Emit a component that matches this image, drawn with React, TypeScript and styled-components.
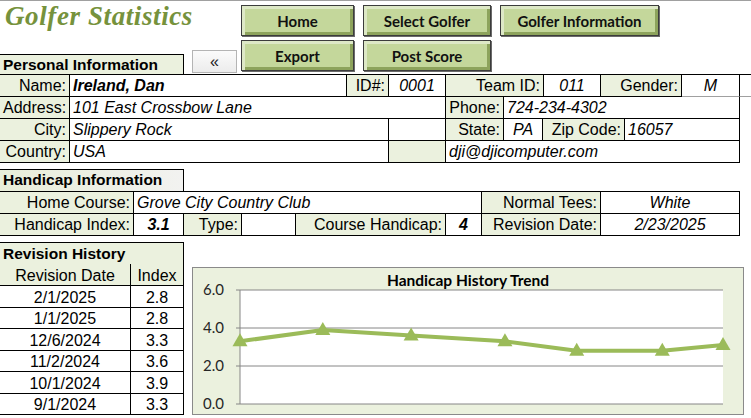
import React from "react";
import styled, { createGlobalStyle } from "styled-components";

const GlobalStyle = createGlobalStyle`
  html, body {
    margin: 0;
    padding: 0;
    background: #fff;
  }
  body {
    font-family: "Liberation Sans", Arial, sans-serif;
    color: #000;
  }
  * {
    box-sizing: border-box;
  }
`;

const Page = styled.div`
  width: 751px;
  height: 418px;
  overflow: hidden;
  border-top: 1px solid #a0a0a0;
`;

const TopBar = styled.div`
  display: flex;
  align-items: flex-start;
  height: 73px;
`;

const LeftCol = styled.div`
  width: 192px;
  height: 100%;
  display: flex;
  flex-direction: column;
  justify-content: space-between;
`;

const Title = styled.h1`
  margin: 1px 0 0 5px;
  white-space: nowrap;
  font-family: "Liberation Serif", "Times New Roman", serif;
  font-style: italic;
  font-weight: bold;
  font-size: 27px;
  line-height: 28px;
  letter-spacing: 0.6px;
  color: #76923c;
`;

const SectionHeader = styled.div<{ $height?: number; $fade?: boolean }>`
  width: 184px;
  height: ${(p) => p.$height ?? 20}px;
  border-top: 1px solid #000;
  border-right: 1px solid #000;
  background: ${(p) =>
    p.$fade ? "linear-gradient(to right, #e8eed9, #f2f2f0)" : "#ebf1de"};
  font-weight: bold;
  font-size: 15.5px;
  line-height: 20px;
  padding-left: 3px;
`;

const BackButton = styled.button`
  align-self: flex-end;
  margin-bottom: 1px;
  width: 45px;
  height: 23px;
  padding: 0;
  border: 1px solid #b4b4b4;
  background: linear-gradient(#fbfbfb, #ececec);
  font-family: "Liberation Sans", Arial, sans-serif;
  font-size: 16px;
  color: #222;
`;

const ButtonGrid = styled.div`
  margin: 4px 0 0 4px;
  display: grid;
  grid-template-columns: 113px 128px 159px;
  grid-auto-rows: 31px;
  column-gap: 9px;
  row-gap: 4px;
`;

const NavButton = styled.button`
  padding: 0;
  border: 1px solid #3c3c3c;
  background: #c4d79b;
  box-shadow: inset 3px 3px 0 #dde8c6, inset -3px -3px 0 #8da35c,
    1px 1px 0 #6a6a6a;
  font-family: "Lato", "Open Sans", sans-serif;
  font-weight: bold;
  font-size: 15px;
  color: #111;
`;

const Table = styled.div<{ $width: number }>`
  width: ${(p) => p.$width}px;
  border-top: 1px solid #000;
`;

const Row = styled.div<{ $h?: number }>`
  display: flex;
  height: ${(p) => p.$h ?? 22}px;
`;

const Cell = styled.div<{
  $w: number;
  $label?: boolean;
  $align?: "left" | "center" | "right";
  $bold?: boolean;
  $plain?: boolean;
  $shade?: boolean;
  $softBottom?: boolean;
}>`
  flex: 0 0 ${(p) => p.$w}px;
  width: ${(p) => p.$w}px;
  border-right: 1px solid #000;
  border-bottom: 1px solid ${(p) => (p.$softBottom ? "#a0a0a0" : "#000")};
  background: ${(p) => (p.$label || p.$shade ? "#ebf1de" : "#fff")};
  text-align: ${(p) => p.$align ?? (p.$label ? "right" : "left")};
  font-style: ${(p) => (p.$label || p.$plain ? "normal" : "italic")};
  font-weight: ${(p) => (p.$bold ? "bold" : "normal")};
  font-size: 16px;
  line-height: 20px;
  padding: 1px 3px 0;
  white-space: nowrap;
  overflow: hidden;
`;

const Filler = styled.div`
  flex: 1;
  border-bottom: 1px solid #a0a0a0;
`;

const Section = styled.div<{ $top: number }>`
  margin-top: ${(p) => p.$top}px;
`;

const HeaderBox = styled.div`
  height: 22px;
  display: flex;
  align-items: flex-end;
`;

const Bottom = styled.div`
  display: flex;
  align-items: flex-start;
  margin-top: 6px;
`;

const HistoryCol = styled.div`
  width: 184px;
  border-top: 1px solid #000;
  border-right: 1px solid #000;
`;

const HistoryTitle = styled.div`
  height: 21px;
  background: #ebf1de;
  font-weight: bold;
  font-size: 15.5px;
  line-height: 21px;
  padding-left: 3px;
`;

const HistoryRow = styled.div<{ $head?: boolean }>`
  display: grid;
  grid-template-columns: 131px 1fr;
  height: ${(p) => (p.$head ? 22 : 21.5)}px;
  background: ${(p) => (p.$head ? "#ebf1de" : "#fff")};
  border-bottom: 1px solid #000;
  font-size: 16px;
  line-height: 20px;
  padding-top: ${(p) => (p.$head ? 2 : 1.5)}px;
  text-align: center;
  overflow: hidden;

  & > span:first-child {
    border-right: 1px solid #000;
    margin-top: -2px;
    padding-top: 2px;
  }
`;

const ChartBox = styled.div`
  margin: 25px 0 0 8px;
  width: 552px;
  height: 148px;
  border: 1px solid #8a8a8a;
  background: #ebf1de;
`;

const history = [
  { date: "2/1/2025", index: "2.8" },
  { date: "1/1/2025", index: "2.8" },
  { date: "12/6/2024", index: "3.3" },
  { date: "11/2/2024", index: "3.6" },
  { date: "10/1/2024", index: "3.9" },
  { date: "9/1/2024", index: "3.3" },
];

// days since 9/1/2024, handicap index
const trend = [
  { d: 0, v: 3.3 },
  { d: 30, v: 3.9 },
  { d: 62, v: 3.6 },
  { d: 96, v: 3.3 },
  { d: 122, v: 2.8 },
  { d: 153, v: 2.8 },
  { d: 175, v: 3.1 },
];

const TrendChart: React.FC = () => {
  const x0 = 47;
  const x1 = 530;
  const yTop = 22;
  const yBot = 136;
  const px = (d: number) => x0 + (d / 175) * (x1 - x0);
  const py = (v: number) => yBot - (v / 6) * (yBot - yTop);
  const pts = trend.map((t) => [px(t.d), py(t.v)]);
  return (
    <svg width="550" height="146" viewBox="0 0 550 146">
      <rect x={x0} y={yTop} width={x1 - x0} height={yBot - yTop} fill="#fff" />
      {[6, 4, 2, 0].map((v) => (
        <g key={v}>
          <line x1={x0 - 4} x2={x1} y1={py(v)} y2={py(v)} stroke="#868686" strokeWidth="1" />
          <text
            x={x0 - 16}
            y={py(v) + 5}
            textAnchor="end"
            fontFamily="Lato, 'Open Sans', sans-serif"
            fontSize="15"
            fill="#262626"
          >
            {v.toFixed(1)}
          </text>
        </g>
      ))}
      <line x1={x0} x2={x0} y1={yTop} y2={yBot} stroke="#868686" strokeWidth="1" />
      <text
        x="275"
        y="18"
        textAnchor="middle"
        fontFamily="Lato, 'Open Sans', sans-serif"
        fontWeight="bold"
        fontSize="15.5"
        fill="#000"
      >
        Handicap History Trend
      </text>
      <polyline
        points={pts.map((p) => p.join(",")).join(" ")}
        fill="none"
        stroke="#9bbb59"
        strokeWidth="4"
        strokeLinejoin="round"
      />
      {pts.map(([x, y], i) => (
        <polygon
          key={i}
          points={`${x},${y - 8} ${x - 7.5},${y + 5} ${x + 7.5},${y + 5}`}
          fill="#9bbb59"
        />
      ))}
    </svg>
  );
};

const App: React.FC = () => {
  return (
    <>
      <GlobalStyle />
      <Page>
        <TopBar>
          <LeftCol>
            <Title>Golfer Statistics</Title>
            <SectionHeader>Personal Information</SectionHeader>
          </LeftCol>
          <BackButton>«</BackButton>
          <ButtonGrid>
            <NavButton>Home</NavButton>
            <NavButton>Select Golfer</NavButton>
            <NavButton>Golfer Information</NavButton>
            <NavButton>Export</NavButton>
            <NavButton>Post Score</NavButton>
          </ButtonGrid>
        </TopBar>

        <Table $width={751}>
          <Row>
            <Cell $w={70} $label>Name:</Cell>
            <Cell $w={277} $bold>Ireland, Dan</Cell>
            <Cell $w={42} $label>ID#:</Cell>
            <Cell $w={57} $align="center">0001</Cell>
            <Cell $w={98} $label>Team ID:</Cell>
            <Cell $w={57} $align="center">011</Cell>
            <Cell $w={81} $label>Gender:</Cell>
            <Cell $w={58} $align="center" $softBottom>M</Cell>
            <Filler />
          </Row>
          <Row>
            <Cell $w={70} $label>Address:</Cell>
            <Cell $w={376}>101 East Crossbow Lane</Cell>
            <Cell $w={58} $label>Phone:</Cell>
            <Cell $w={236}>724-234-4302</Cell>
          </Row>
          <Row>
            <Cell $w={70} $label>City:</Cell>
            <Cell $w={319}>Slippery Rock</Cell>
            <Cell $w={57} />
            <Cell $w={58} $label>State:</Cell>
            <Cell $w={39} $align="center">PA</Cell>
            <Cell $w={82} $label>Zip Code:</Cell>
            <Cell $w={115}>16057</Cell>
          </Row>
          <Row>
            <Cell $w={70} $label>Country:</Cell>
            <Cell $w={319}>USA</Cell>
            <Cell $w={57} $shade />
            <Cell $w={294}>dji@djicomputer.com</Cell>
          </Row>
        </Table>

        <Section $top={6}>
          <HeaderBox>
            <SectionHeader $height={22} $fade>
              Handicap Information
            </SectionHeader>
          </HeaderBox>
          <Table $width={740}>
            <Row>
              <Cell $w={134} $label>Home Course:</Cell>
              <Cell $w={348}>Grove City Country Club</Cell>
              <Cell $w={119} $label>Normal Tees:</Cell>
              <Cell $w={139} $align="center">White</Cell>
            </Row>
            <Row>
              <Cell $w={134} $label>Handicap Index:</Cell>
              <Cell $w={50} $align="center" $bold>3.1</Cell>
              <Cell $w={58} $label>Type:</Cell>
              <Cell $w={54} />
              <Cell $w={150} $label>Course Handicap:</Cell>
              <Cell $w={36} $align="center" $bold>4</Cell>
              <Cell $w={119} $label>Revision Date:</Cell>
              <Cell $w={139} $align="center">2/23/2025</Cell>
            </Row>
          </Table>
        </Section>

        <Bottom>
          <HistoryCol>
            <HistoryTitle>Revision History</HistoryTitle>
            <HistoryRow $head>
              <span>Revision Date</span>
              <span>Index</span>
            </HistoryRow>
            {history.map((h) => (
              <HistoryRow key={h.date}>
                <span>{h.date}</span>
                <span>{h.index}</span>
              </HistoryRow>
            ))}
          </HistoryCol>
          <ChartBox>
            <TrendChart />
          </ChartBox>
        </Bottom>
      </Page>
    </>
  );
};

export default App;
